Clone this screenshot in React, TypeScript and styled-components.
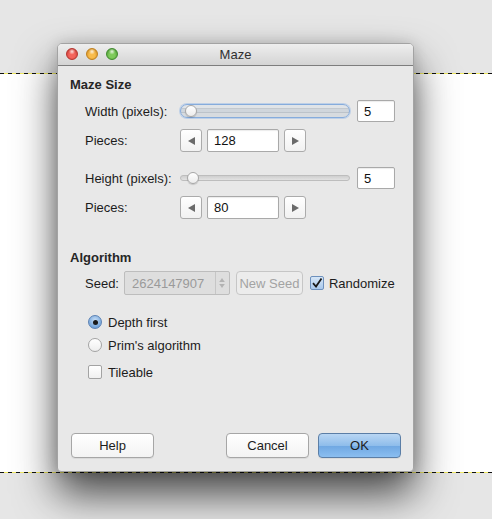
import React, { useState } from 'react';
import styled, { createGlobalStyle, css } from 'styled-components';

const GlobalStyle = createGlobalStyle`
  html, body {
    margin: 0;
    padding: 0;
  }
  body {
    font-family: "Liberation Sans", Arial, sans-serif;
    font-size: 13px;
    color: #1c1c1c;
    background: #e6e6e6;
  }
`;

const Page = styled.div`
  position: relative;
  width: 492px;
  height: 519px;
  overflow: hidden;
  background: #e6e6e6;
`;

const GrayBand = styled.div`
  height: 73px;
  background: #e6e6e6;
`;

const Dashes = styled.div`
  height: 1px;
  background: repeating-linear-gradient(90deg, #111 0 4px, #f1ea62 4px 8px);
`;

const CanvasBand = styled.div`
  height: 398px;
  background: #ffffff;
`;

const Window = styled.div`
  position: absolute;
  left: 57px;
  top: 43px;
  width: 357px;
  height: 429px;
  box-sizing: border-box;
  border: 1px solid #a3a3a3;
  border-radius: 5px 5px 4px 4px;
  background: #e8e8e8;
  box-shadow: 0 22px 42px rgba(0, 0, 0, 0.7), 0 0 14px rgba(0, 0, 0, 0.15);
  display: flex;
  flex-direction: column;
  overflow: hidden;
`;

const TitleBar = styled.div`
  position: relative;
  height: 21px;
  flex: none;
  display: flex;
  align-items: center;
  justify-content: center;
  background: linear-gradient(#eeeeee, #d4d4d4);
  border-bottom: 1px solid #7d7d7d;
  color: #303030;
`;

const Lights = styled.div`
  position: absolute;
  left: 8px;
  top: 4px;
  display: flex;
  gap: 8px;
`;

const Light = styled.span<{ $c: string; $d: string }>`
  width: 12px;
  height: 12px;
  border-radius: 50%;
  box-sizing: border-box;
  border: 1px solid ${p => p.$d};
  background: radial-gradient(circle at 50% 25%, #ffffffcc 0, transparent 35%),
    radial-gradient(circle at 50% 60%, ${p => p.$c} 35%, ${p => p.$d} 100%);
`;

const Body = styled.div`
  flex: 1;
  display: flex;
  flex-direction: column;
  padding: 11px 12px 13px 12px;
`;

const SectionTitle = styled.div<{ $gap?: number }>`
  font-weight: bold;
  line-height: 16px;
  margin-top: ${p => p.$gap ?? 0}px;
  color: #262626;
`;

const Row = styled.div<{ $gap: number; $h?: number }>`
  display: grid;
  grid-template-columns: 95px auto;
  align-items: center;
  padding-left: 15px;
  height: ${p => p.$h ?? 23}px;
  margin-top: ${p => p.$gap}px;
`;

const Controls = styled.div<{ $gap: number }>`
  display: flex;
  align-items: center;
  gap: ${p => p.$gap}px;
`;

const Field = styled.div<{ $w: number }>`
  width: ${p => p.$w}px;
  height: 22px;
  box-sizing: border-box;
  border: 1px solid #a9a9a9;
  border-radius: 2px;
  background: #ffffff;
  box-shadow: inset 0 1px 1px rgba(0, 0, 0, 0.08);
  display: flex;
  align-items: center;
  padding-left: 6px;
  color: #111;
`;

const ArrowButton = styled.div`
  width: 22px;
  height: 23px;
  box-sizing: border-box;
  border: 1px solid #ababab;
  border-radius: 3px;
  background: linear-gradient(#ffffff, #f1f1f1);
  display: flex;
  align-items: center;
  justify-content: center;
`;

const Track = styled.div<{ $focused?: boolean }>`
  position: relative;
  width: 170px;
  box-sizing: border-box;
  border-radius: 7px;
  ${p =>
    p.$focused
      ? css`
          height: 14px;
          border: 1px solid #86acdc;
          box-shadow: 0 0 0 1px rgba(140, 180, 230, 0.45);
          background: linear-gradient(
            #e0e4e8 0 3px,
            #c3c9cf 3px 4px,
            #d0d6dc 4px 7px,
            #bcc3ca 7px 8px,
            #d7dbdf 8px
          );
        `
      : css`
          height: 6px;
          border: 1px solid #bdbdbd;
          background: linear-gradient(#cfcfcf, #e2e2e2);
        `}
`;

const Knob = styled.div<{ $left: number }>`
  position: absolute;
  top: 50%;
  left: ${p => p.$left}px;
  width: 12px;
  height: 12px;
  margin-top: -6px;
  box-sizing: border-box;
  border-radius: 50%;
  border: 1px solid #a7a7a7;
  background: linear-gradient(#ffffff, #ececec);
  box-shadow: 0 1px 1px rgba(0, 0, 0, 0.15);
`;

const SeedRow = styled.div`
  display: flex;
  align-items: center;
  height: 24px;
  margin-top: 5px;
  padding-left: 15px;
`;

const SeedField = styled.div`
  width: 106px;
  height: 24px;
  margin-left: 5px;
  box-sizing: border-box;
  border: 1px solid #bdbdbd;
  border-radius: 2px;
  background: #dedede;
  display: flex;
  color: #9a9a9a;
`;

const SeedText = styled.div`
  flex: 1;
  display: flex;
  align-items: center;
  padding-left: 7px;
`;

const Spinner = styled.div`
  width: 13px;
  border-left: 1px solid #c6c6c6;
  display: flex;
  flex-direction: column;
  align-items: center;
  justify-content: center;
  gap: 2px;
`;

const PushButton = styled.button<{ $w: number; $primary?: boolean; $disabled?: boolean }>`
  width: ${p => p.$w}px;
  height: 25px;
  padding: 0;
  box-sizing: border-box;
  font-family: inherit;
  font-size: 13px;
  border-radius: 4px;
  border: 1px solid #a6a6a6;
  background: linear-gradient(#ffffff, #f3f3f3);
  color: #1c1c1c;
  box-shadow: 0 1px 0 rgba(0, 0, 0, 0.06);
  white-space: nowrap;
  ${p =>
    p.$primary &&
    css`
      border-color: #5b7ea6;
      background: linear-gradient(#b9d6f3, #8fbdeb 50%, #6fa7e2 51%, #8bbef0);
    `}
  ${p =>
    p.$disabled &&
    css`
      height: 24px;
      margin-left: 6px;
      border-color: #c6c6c6;
      background: #ececec;
      color: #a3a3a3;
      box-shadow: none;
    `}
`;

const Check = styled.div<{ $on?: boolean }>`
  width: 14px;
  height: 14px;
  box-sizing: border-box;
  border-radius: 2px;
  border: 1px solid ${p => (p.$on ? '#6d90bd' : '#a3a3a3')};
  background: ${p => (p.$on ? 'linear-gradient(#d6e6f7, #a9c8ec)' : 'linear-gradient(#ffffff, #f0f0f0)')};
  display: flex;
  align-items: center;
  justify-content: center;
  flex: none;
`;

const Radio = styled.div<{ $on?: boolean }>`
  width: 14px;
  height: 14px;
  box-sizing: border-box;
  border-radius: 50%;
  border: 1px solid ${p => (p.$on ? '#5c82b4' : '#a3a3a3')};
  background: ${p =>
    p.$on ? 'radial-gradient(circle at 50% 35%, #c7def6, #6b9fd8 80%)' : 'linear-gradient(#ffffff, #eeeeee)'};
  display: flex;
  align-items: center;
  justify-content: center;
  flex: none;
  &::after {
    content: '';
    display: ${p => (p.$on ? 'block' : 'none')};
    width: 5px;
    height: 5px;
    border-radius: 50%;
    background: #1a1a1a;
  }
`;

const Option = styled.div<{ $gap: number }>`
  display: flex;
  align-items: center;
  gap: 6px;
  height: 16px;
  margin-top: ${p => p.$gap}px;
  padding-left: 18px;
`;

const Randomize = styled.div`
  display: flex;
  align-items: center;
  gap: 5px;
  margin-left: 7px;
`;

const Footer = styled.div`
  margin-top: auto;
  display: flex;
  gap: 9px;
  padding-left: 1px;
`;

const Spacer = styled.div`
  flex: 1;
`;

function Triangle({ dir, color = '#6a6a6a' }: { dir: 'left' | 'right' | 'up' | 'down'; color?: string }) {
  const pts = {
    left: '0,4 7,0 7,8',
    right: '0,0 7,4 0,8',
    up: '0,5 3.5,0 7,5',
    down: '0,0 7,0 3.5,5',
  }[dir];
  const small = dir === 'up' || dir === 'down';
  return (
    <svg width={small ? 6 : 7} height={small ? 4 : 8} viewBox={small ? '0 0 7 5' : '0 0 7 8'}>
      <polygon points={pts} fill={color} />
    </svg>
  );
}

function Stepper({ value }: { value: string }) {
  return (
    <Controls $gap={5}>
      <ArrowButton>
        <Triangle dir="left" />
      </ArrowButton>
      <Field $w={72} style={{ height: 23 }}>{value}</Field>
      <ArrowButton>
        <Triangle dir="right" />
      </ArrowButton>
    </Controls>
  );
}

function Slider({ focused, knob }: { focused?: boolean; knob: number }) {
  return (
    <Controls $gap={7}>
      <Track $focused={focused}>
        <Knob $left={knob} />
      </Track>
      <Field $w={38}>5</Field>
    </Controls>
  );
}

export default function App() {
  const [algo, setAlgo] = useState<'depth' | 'prim'>('depth');
  const [randomize, setRandomize] = useState(true);
  const [tileable, setTileable] = useState(false);

  return (
    <Page>
      <GlobalStyle />
      <GrayBand />
      <Dashes />
      <CanvasBand />
      <Dashes />

      <Window>
        <TitleBar>
          <Lights>
            <Light $c="#f4645c" $d="#b5332d" />
            <Light $c="#f9bc4b" $d="#c07f1b" />
            <Light $c="#7fcb5b" $d="#3f8a2c" />
          </Lights>
          Maze
        </TitleBar>

        <Body>
          <SectionTitle>Maze Size</SectionTitle>
          <Row $gap={7} $h={22}>
            <span>Width (pixels):</span>
            <Slider focused knob={4} />
          </Row>
          <Row $gap={7}>
            <span>Pieces:</span>
            <Stepper value="128" />
          </Row>
          <Row $gap={15} $h={22}>
            <span>Height (pixels):</span>
            <Slider knob={6} />
          </Row>
          <Row $gap={7}>
            <span>Pieces:</span>
            <Stepper value="80" />
          </Row>

          <SectionTitle $gap={31}>Algorithm</SectionTitle>
          <SeedRow>
            <span>Seed:</span>
            <SeedField>
              <SeedText>2624147907</SeedText>
              <Spinner>
                <Triangle dir="up" color="#b3b3b3" />
                <Triangle dir="down" color="#b3b3b3" />
              </Spinner>
            </SeedField>
            <PushButton $w={67} $disabled>
              New Seed
            </PushButton>
            <Randomize onClick={() => setRandomize(!randomize)}>
              <Check $on={randomize}>
                {randomize && (
                  <svg width="12" height="12" viewBox="0 0 12 12">
                    <path d="M2 6.2 L5 9.5 L10.5 1.5" fill="none" stroke="#1a1a1a" strokeWidth="1.8" />
                  </svg>
                )}
              </Check>
              Randomize
            </Randomize>
          </SeedRow>

          <Option $gap={19} onClick={() => setAlgo('depth')}>
            <Radio $on={algo === 'depth'} />
            Depth first
          </Option>
          <Option $gap={7} onClick={() => setAlgo('prim')}>
            <Radio $on={algo === 'prim'} />
            Prim's algorithm
          </Option>
          <Option $gap={11} onClick={() => setTileable(!tileable)}>
            <Check $on={tileable} />
            Tileable
          </Option>

          <Footer>
            <PushButton $w={83}>Help</PushButton>
            <Spacer />
            <PushButton $w={83}>Cancel</PushButton>
            <PushButton $w={83} $primary>
              OK
            </PushButton>
          </Footer>
        </Body>
      </Window>
    </Page>
  );
}
